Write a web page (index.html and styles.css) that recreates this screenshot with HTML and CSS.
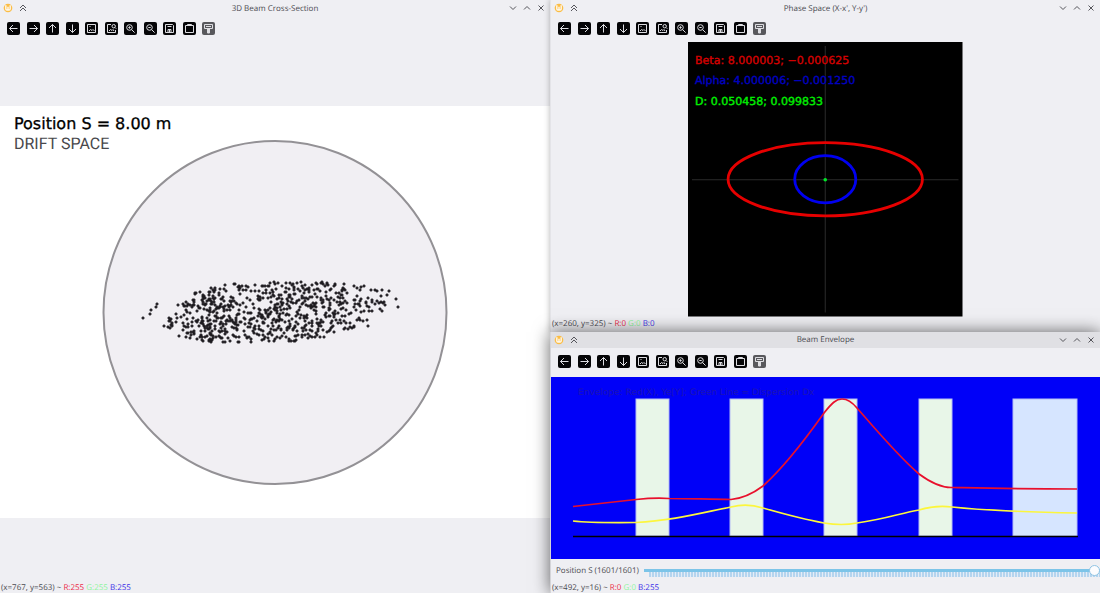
FILE: index.html
```
<!DOCTYPE html>
<html lang="en">
<head>
    <meta charset="UTF-8">
    <meta name="viewport" content="width=device-width, initial-scale=1.0">
    <title>Beam Viewer</title>
    <link rel="stylesheet" href="styles.css">
</head>
<body>

    <!-- shared icons -->
    <svg class="sprite" aria-hidden="true">
        <symbol id="logo" viewBox="0 0 12 12">
            <circle cx="6" cy="6" r="5.200" fill="#fbbd45"/>
            <path d="M3.400 2.800v4.400q0 1.200 1.300 1.200T6 7.200V4.500v2.700q0 1.200 1.300 1.200t1.300-1.200V2.800" fill="none" stroke="#fffaf0" stroke-width="1.700"/>
        </symbol>
        <symbol id="shade" viewBox="0 0 8 8"><path d="M1 4l3-3 3 3M1 7l3-3 3 3"/></symbol>
        <symbol id="min" viewBox="0 0 8 8"><path d="M1 2.500l3 3 3-3"/></symbol>
        <symbol id="max" viewBox="0 0 8 8"><path d="M1 5.500l3-3 3 3"/></symbol>
        <symbol id="close" viewBox="0 0 8 8"><path d="M1.500 1.500l5 5M6.500 1.500l-5 5"/></symbol>
        <symbol id="left" viewBox="0 0 13 13"><path d="M10.500 6.500h-8M6 3L2.500 6.500 6 10"/></symbol>
        <symbol id="right" viewBox="0 0 13 13"><path d="M2.500 6.500h8M7 3l3.500 3.500L7 10"/></symbol>
        <symbol id="up" viewBox="0 0 13 13"><path d="M6.500 10.500v-8M3 6l3.500-3.500L10 6"/></symbol>
        <symbol id="down" viewBox="0 0 13 13"><path d="M6.500 2.500v8M3 7l3.500 3.500L10 7"/></symbol>
        <symbol id="image" viewBox="0 0 13 13"><path d="M2.500 2.500h8v8h-8zM4 9l1.500-1.500L7 8.500l1-1L9.500 9M4.500 4.500h1"/></symbol>
        <symbol id="imagezoom" viewBox="0 0 13 13"><path d="M6 2.500H2.500v8h8V8M4 9l1.500-1.500L7 8.500l1-1L9 9M10 5.500l1.200 1.200"/><circle cx="8.700" cy="4.200" r="1.700"/></symbol>
        <symbol id="zoomin" viewBox="0 0 13 13"><circle cx="5.500" cy="5.500" r="2.800"/><path d="M7.600 7.600l3 3M4.300 5.500h2.400M5.500 4.300v2.400"/></symbol>
        <symbol id="zoomout" viewBox="0 0 13 13"><circle cx="5.500" cy="5.500" r="2.800"/><path d="M7.600 7.600l3 3M4.300 5.500h2.400"/></symbol>
        <symbol id="save" viewBox="0 0 13 13"><path d="M2.500 2.500h7l1 1v7h-8zM4.500 4.500h4M5 10V7.500h3V10M6.500 7.500v2.500"/></symbol>
        <symbol id="paste" viewBox="0 0 13 13"><path d="M2.500 3.500h8v7h-8zM4.500 2.500h4v1h-4z"/></symbol>
        <symbol id="brush" viewBox="0 0 13 13"><path d="M2.500 2.500h8v4h-8zM4 4.500h5M5.500 7h2v4h-2zM6.500 7v4"/></symbol>
    </svg>

    <main class="desktop">
        <section class="window cross-section">
            <header class="titlebar">
                <svg class="logo"><use href="#logo"/></svg>
                <button class="wbtn" aria-label="Shade"><svg><use href="#shade"/></svg></button>
                <h1>3D Beam Cross-Section</h1>
                <button class="wbtn" aria-label="Minimize"><svg><use href="#min"/></svg></button>
                <button class="wbtn" aria-label="Maximize"><svg><use href="#max"/></svg></button>
                <button class="wbtn" aria-label="Close"><svg><use href="#close"/></svg></button>
            </header>
            <div class="toolbar"></div>
            <div class="view">
                <svg class="plot" viewBox="0 0 550 412">
                    <rect width="550" height="412" fill="#fff"/>
                    <circle cx="275" cy="206.500" r="171.500" fill="#f1eff3" stroke="#939195" stroke-width="2"/>
                    <path id="particles" stroke="#1c1a1e" stroke-width="1.500"/>
                    <text class="position" x="14" y="23">Position S = 8.00 m</text>
                    <text class="element" x="14" y="43">DRIFT SPACE</text>
                </svg>
            </div>
            <footer class="status">(x=767, y=563) ~ <span class="r">R:255</span> <span class="g">G:255</span> <span class="b">B:255</span></footer>
        </section>

        <div class="side">
            <section class="window phase-space">
                <header class="titlebar">
                    <svg class="logo"><use href="#logo"/></svg>
                    <button class="wbtn" aria-label="Shade"><svg><use href="#shade"/></svg></button>
                    <h1>Phase Space (X-x', Y-y')</h1>
                    <button class="wbtn" aria-label="Minimize"><svg><use href="#min"/></svg></button>
                    <button class="wbtn" aria-label="Maximize"><svg><use href="#max"/></svg></button>
                    <button class="wbtn" aria-label="Close"><svg><use href="#close"/></svg></button>
                </header>
                <div class="toolbar"></div>
                <div class="view">
                    <svg class="plot" viewBox="0 0 274 274">
                        <rect width="274" height="274" fill="#000"/>
                        <path d="M4 137.500h266M137 4v266" stroke="#2b2b2b"/>
                        <ellipse cx="137" cy="137" rx="97" ry="36.500" fill="none" stroke="#e60000" stroke-width="2.800"/>
                        <ellipse cx="137" cy="137" rx="30.500" ry="23.500" fill="none" stroke="#0000f0" stroke-width="2.800"/>
                        <circle cx="137" cy="137.500" r="1.800" fill="#00e628"/>
                        <text class="beta" x="7" y="22">Beta: 8.000003; −0.000625</text>
                        <text class="alpha" x="7" y="42">Alpha: 4.000006; −0.001250</text>
                        <text class="dispersion" x="7" y="63">D: 0.050458; 0.099833</text>
                    </svg>
                </div>
                <footer class="status">(x=260, y=325) ~ <span class="r">R:0</span> <span class="g">G:0</span> <span class="b">B:0</span></footer>
            </section>

            <section class="window envelope active">
                <header class="titlebar">
                    <svg class="logo"><use href="#logo"/></svg>
                    <button class="wbtn" aria-label="Shade"><svg><use href="#shade"/></svg></button>
                    <h1>Beam Envelope</h1>
                    <button class="wbtn" aria-label="Minimize"><svg><use href="#min"/></svg></button>
                    <button class="wbtn" aria-label="Maximize"><svg><use href="#max"/></svg></button>
                    <button class="wbtn" aria-label="Close"><svg><use href="#close"/></svg></button>
                </header>
                <div class="toolbar"></div>
                <div class="view">
                    <svg class="plot" viewBox="0 0 549 182">
                        <rect width="549" height="182" fill="#0000f8"/>
                        <text x="27" y="18">Envelope: Red(X), Ye[Y]; Green Line = Dispersion Dx</text>
                        <g fill="#e8f6e8" stroke="#b4bcf4" stroke-width="1">
                            <rect x="85" y="22" width="33" height="137"/>
                            <rect x="179" y="22" width="33" height="137"/>
                            <rect x="273" y="22" width="33" height="137"/>
                            <rect x="368" y="22" width="33" height="137"/>
                            <rect x="462" y="22" width="64" height="137" fill="#d6e5ff"/>
                        </g>
                        <path d="M22 159.500h505" stroke="#000" stroke-width="1.400"/>
                        <path d="M22 144Q40 146 85 145.500C120 144 150 136 180 130Q196 126 212 131C240 139 256 143 273 146Q291 149 306 146C335 142 350 136 368 133Q384 128 401 130C430 133 470 135 526 136" fill="none" stroke="#fcf63c" stroke-width="1.700"/>
                        <path d="M22 129.500L85 122.500Q104 120.500 118 121.500C140 122 165 122 180 122.500Q196 121 212 109C232 91 256 60 273 36C281 26 285 22 291 22S301 25 306 31C326 54 348 80 368 97Q387 111 401 110.500C425 111 460 112 526 112" fill="none" stroke="#e8102c" stroke-width="1.700"/>
                    </svg>
                </div>
                <div class="track">
                    <label for="position">Position S (1601/1601)</label>
                    <input type="range" id="position" min="0" max="1601" value="1601">
                </div>
                <footer class="status">(x=492, y=16) ~ <span class="r">R:0</span> <span class="g">G:0</span> <span class="b">B:255</span></footer>
            </section>
        </div>
    </main>

    <script src="script.js"></script>
</body>
</html>
```

FILE: styles.css
```
body {
    margin: 0;
    min-height: 100vh;
    font-family: "Open Sans", sans-serif;
    font-size: 8px;
    text-rendering: geometricPrecision;
    color: #4a4a50;
    background-color: #efeff3;
}

.sprite {
    display: none;
}

.desktop {
    display: grid;
    grid-template-columns: 1fr 1fr;
    min-height: 100vh;
}

.side {
    display: flex;
    flex-direction: column;
}

.window {
    display: flex;
    flex-direction: column;
    background-color: #efeff3;
}

.phase-space {
    padding-bottom: 3px;
    border-left: 1px solid #e4e4e8;
    box-shadow: 0 0 6px rgba(0, 0, 0, 0.3);
}

.phase-space .view {
    padding: 1px 0;
}

.envelope {
    flex: 1;
    position: relative;
    border-left: 1px solid #d4d4d8;
    box-shadow: 0 0 16px rgba(0, 0, 0, 0.6);
}

.envelope .view {
    padding-top: 1px;
}

.titlebar {
    display: flex;
    align-items: center;
    gap: 6px;
    height: 16px;
    padding: 0 5px 0 3px;
}

.active .titlebar {
    background-color: #e0e0e4;
}

.titlebar h1 {
    flex: 1;
    margin: 0;
    padding-left: 14px;
    font-size: 8px;
    font-weight: normal;
    text-align: center;
}

.logo {
    width: 10px;
    height: 10px;
}

.wbtn {
    width: 8px;
    height: 8px;
    padding: 0;
    border: none;
    background: none;
}

.wbtn svg {
    display: block;
    width: 8px;
    height: 8px;
    fill: none;
    stroke: #55555b;
}

.toolbar {
    display: flex;
    justify-content: space-between;
    align-items: center;
    width: 208px;
    height: 25px;
    padding-left: 7px;
}

.tool {
    width: 13px;
    height: 13px;
    padding: 0;
    border: none;
    border-radius: 2px;
    background-color: #050507;
}

.tool:disabled {
    background-color: #58585c;
}

.tool svg {
    display: block;
    width: 13px;
    height: 13px;
    fill: none;
    stroke: #dedee2;
}

.view {
    flex: 1;
    display: flex;
    align-items: center;
    justify-content: center;
}

.plot {
    display: block;
    width: 100%;
}

.phase-space .plot {
    width: 50%;
}

.envelope .toolbar {
    height: 28px;
}

.position {
    font-family: "DejaVu Sans", sans-serif;
    font-size: 16px;
    fill: #000;
    stroke: #000;
    stroke-width: 0.3;
}

.element {
    font-family: Roboto, sans-serif;
    font-size: 16px;
    fill: #48484c;
}

.phase-space text {
    font-family: "DejaVu Sans", sans-serif;
    font-size: 11px;
    stroke-width: 0.4;
}

.beta {
    fill: #d40000;
    stroke: #d40000;
}

.alpha {
    fill: #0000c0;
    stroke: #0000c0;
}

.dispersion {
    fill: #00f000;
    stroke: #00f000;
}

.envelope text {
    font-family: "DejaVu Sans", sans-serif;
    font-size: 9px;
    fill: #1c14b4;
}

.track {
    display: flex;
    align-items: center;
    gap: 5px;
    height: 23px;
    padding-left: 5px;
}

.track input {
    flex: 1;
    min-width: 0;
    height: 12px;
    margin: 0;
    appearance: none;
    background:
        linear-gradient(#7cc4e8, #7cc4e8) 0 4px / 100% 3px no-repeat,
        repeating-linear-gradient(to right, #b4d4ee 0 2px, #e4ecf6 2px 3px) 5px 7px / 100% 5px no-repeat;
}

.track input::-webkit-slider-thumb {
    appearance: none;
    width: 11px;
    height: 11px;
    border: 1px solid #90c4e4;
    border-radius: 50%;
    background-color: #fcfcfe;
}

.status {
    height: 11px;
    line-height: 11px;
    padding-left: 1px;
}

.r {
    color: #ec2c48;
}

.g {
    color: #90f4a0;
}

.b {
    color: #3c30e8;
}
```

FILE: script.js
```
const tools = ["left", "right", "up", "down", "image", "imagezoom", "zoomin", "zoomout", "save", "paste", "brush"];

document.querySelectorAll(".toolbar").forEach(bar => {
    bar.innerHTML = tools.map(name =>
        `<button class="tool" aria-label="${name}" ${name === "brush" ? "disabled" : ""}><svg><use href="#${name}"/></svg></button>`
    ).join("");
});

// upper and lower edge of the beam, as x, y pairs
const upper = [[162, 219], [180, 192], [200, 184], [235, 177], [275, 176], [320, 176], [370, 180], [386, 190]];
const lower = [[162, 221], [180, 231], [205, 236], [255, 237], [300, 235], [335, 226], [365, 219], [386, 200]];

// lone particles outside the core
const halo = [[143, 212], [151, 204], [150, 208], [156, 201], [157, 198], [164, 220],
    [234, 178], [382, 184], [387, 189], [389, 185], [396, 193], [398, 201], [382, 205],
    [368, 220], [315, 231], [320, 231], [324, 231], [375, 198], [381, 190], [372, 205]];

let seed = 8;

function random() {
    seed = (seed * 16807) % 2147483647;
    return seed / 2147483647;
}

function edgeAt(edge, x) {
    let i = 1;
    while (edge[i][0] < x) i++;
    const [x0, y0] = edge[i - 1];
    const [x1, y1] = edge[i];
    return y0 + (y1 - y0) * (x - x0) / (x1 - x0);
}

const points = [...halo];
while (points.length < 760) {
    const x = 162 + random() * 224;
    const y = 176 + random() * 62;
    if (y < edgeAt(upper, x) || y > edgeAt(lower, x)) continue;
    if ((x > 345 || x < 185) && random() < 0.4) continue;
    points.push([Math.round(x), Math.round(y)]);
}

document.getElementById("particles").setAttribute("d",
    points.map(([x, y]) => `M${x - 1.5} ${y}h3M${x} ${y - 1.5}v3`).join(""));
```
